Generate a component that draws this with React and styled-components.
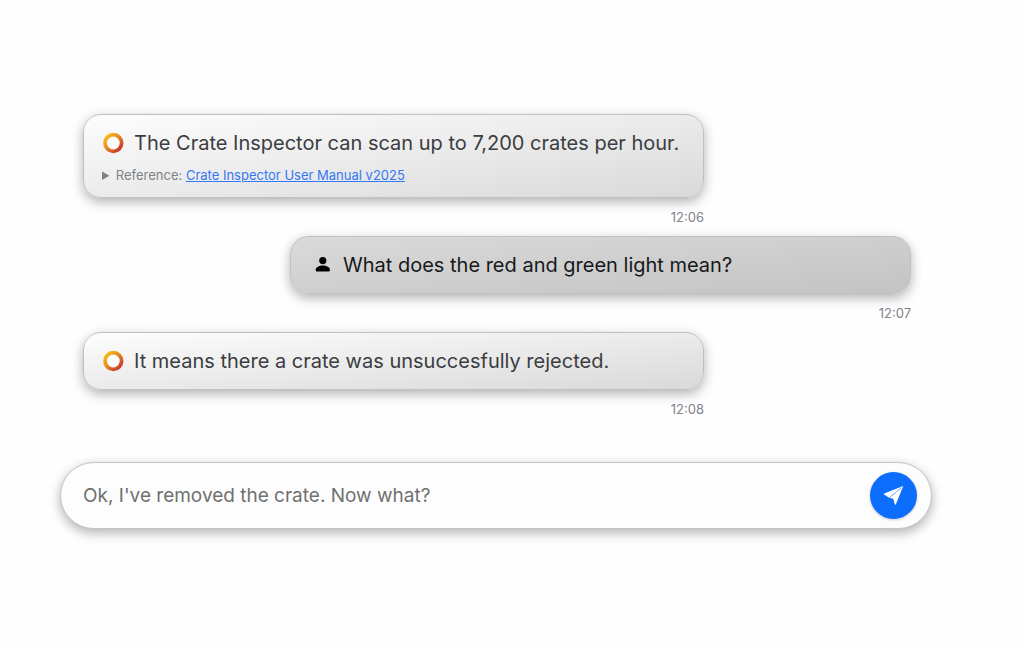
import React, { useState } from "react";
import styled, { createGlobalStyle, css } from "styled-components";

const GlobalStyle = createGlobalStyle`
  * {
    box-sizing: border-box;
  }

  body {
    margin: 0;
    background: #fefefe;
    font-family: Inter, "Open Sans", sans-serif;
  }
`;

const ChatView = styled.main`
  padding: 114px 92px 120px 60px;
`;

const MessageList = styled.div`
  display: flex;
  flex-direction: column;
  padding: 0 21px 0 23px;
`;

const Message = styled.article`
  width: 75%;
  align-self: ${({ $from }) => ($from === "user" ? "flex-end" : "flex-start")};
`;

const botBubble = css`
  background: linear-gradient(to bottom right, #fdfdfd, #d9d9d9);
  color: #3a3d41;
`;

const userBubble = css`
  background: linear-gradient(to bottom right, #dadada, #c3c3c3);
  color: #16181a;
`;

const Bubble = styled.div`
  padding: 12px 18px;
  border: 1px solid #c0c0c0;
  border-radius: 18px;
  box-shadow: 0 4px 12px rgba(0, 0, 0, 0.3);
  ${({ $from }) => ($from === "user" ? userBubble : botBubble)}
`;

const MessageText = styled.p`
  display: flex;
  align-items: center;
  gap: 10px;
  margin: 0;
  font-size: 20px;
  line-height: 32px;

  svg {
    flex: none;
  }
`;

const Reference = styled.details`
  margin-top: 6px;
  color: #7d8287;
  font-size: 13px;
  line-height: 20px;

  summary {
    cursor: pointer;
  }

  a {
    color: #3478f6;
  }
`;

const Time = styled.time`
  display: block;
  padding: 9px 0;
  color: #7f838c;
  font-size: 13px;
  line-height: 20px;
  text-align: right;
`;

const Composer = styled.form`
  display: flex;
  align-items: center;
  margin-top: 34px;
  padding: 9px 14px 9px 22px;
  background: #fdfdfd;
  border: 1px solid #c4c4c4;
  border-radius: 34px;
  box-shadow: 0 4px 12px rgba(0, 0, 0, 0.3);
`;

const TextInput = styled.input`
  flex: 1;
  min-width: 0;
  padding: 0;
  border: none;
  outline: none;
  background: transparent;
  color: #333;
  font-family: inherit;
  font-size: 19px;
  line-height: 32px;

  &::placeholder {
    color: #707070;
    opacity: 1;
  }
`;

const SendButton = styled.button`
  display: flex;
  align-items: center;
  justify-content: center;
  width: 47px;
  height: 47px;
  padding: 0;
  border: none;
  border-radius: 50%;
  background: #0d6efd;
  box-shadow: 0 1px 3px rgba(0, 0, 0, 0.2);
  cursor: pointer;
`;

const RingIcon = () => (
  <svg width="22" height="22" viewBox="0 0 22 22" aria-hidden="true">
    <defs>
      <linearGradient id="ring" x1="0" y1="0" x2="1" y2="1">
        <stop offset="0.1" stopColor="#f5b916" />
        <stop offset="0.5" stopColor="#e58322" />
        <stop offset="0.9" stopColor="#c93a2c" />
      </linearGradient>
    </defs>
    <circle
      cx="11.3"
      cy="11"
      r="8.3"
      fill="#fdfdfd"
      stroke="url(#ring)"
      strokeWidth="3.7"
    />
  </svg>
);

const PersonIcon = () => (
  <svg width="24" height="22" viewBox="0 0 24 22" aria-hidden="true">
    <circle cx="13.8" cy="6.6" r="3.6" />
    <path d="M6.7 16.6v-.8c0-2.7 3.4-4.3 7.1-4.3s7.1 1.6 7.1 4.3v.8c0 .5-.3.8-.8.8H7.5c-.5 0-.8-.3-.8-.8z" />
  </svg>
);

const PlaneIcon = () => (
  <svg width="22" height="22" viewBox="0 0 22 22" aria-hidden="true">
    <path
      d="M20.2 1 1.2 8.6c-.5.2-.5.7-.1 1l5 3.1 4.2 1 1.4 5.6c.2.5.8.6 1.1.1z"
      fill="#fff"
    />
    <path d="M18.4 2.8 6.4 12.6" stroke="#6ba5fe" strokeWidth="1" />
  </svg>
);

const messages = [
  {
    from: "bot",
    text: "The Crate Inspector can scan up to 7,200 crates per hour.",
    reference: "Crate Inspector User Manual v2025",
    time: "12:06",
  },
  {
    from: "user",
    text: "What does the red and green light mean?",
    time: "12:07",
  },
  {
    from: "bot",
    text: "It means there a crate was unsuccesfully rejected.",
    time: "12:08",
  },
];

const App = () => {
  const [draft, setDraft] = useState("");

  return (
    <>
      <GlobalStyle />
      <ChatView>
        <MessageList>
          {messages.map(({ from, text, reference, time }) => (
            <Message key={time} $from={from}>
              <Bubble $from={from}>
                <MessageText>
                  {from === "user" ? <PersonIcon /> : <RingIcon />}
                  <span>{text}</span>
                </MessageText>
                {reference && (
                  <Reference>
                    <summary>
                      Reference: <a href="#manual">{reference}</a>
                    </summary>
                  </Reference>
                )}
              </Bubble>
              <Time>{time}</Time>
            </Message>
          ))}
        </MessageList>

        <Composer onSubmit={(e) => e.preventDefault()}>
          <TextInput
            aria-label="Message"
            placeholder="Ok, I've removed the crate. Now what?"
            value={draft}
            onChange={(e) => setDraft(e.target.value)}
          />
          <SendButton type="submit" aria-label="Send">
            <PlaneIcon />
          </SendButton>
        </Composer>
      </ChatView>
    </>
  );
};

export default App;
